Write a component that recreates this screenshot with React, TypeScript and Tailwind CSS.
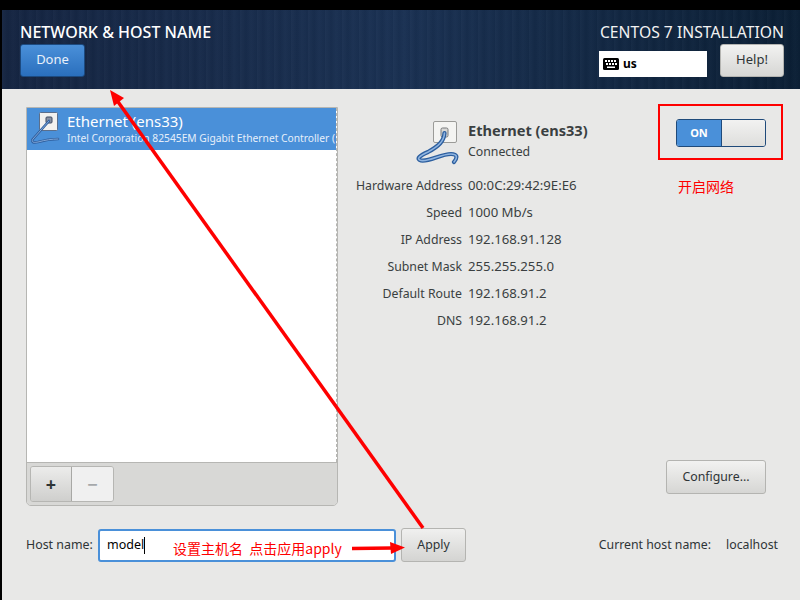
import React from 'react';

const details = [
  ['Hardware Address', '00:0C:29:42:9E:E6'],
  ['Speed', '1000 Mb/s'],
  ['IP Address', '192.168.91.128'],
  ['Subnet Mask', '255.255.255.0'],
  ['Default Route', '192.168.91.2'],
  ['DNS', '192.168.91.2'],
];

function EthernetIcon({ small }: { small?: boolean }) {
  if (small) {
    return (
      <svg width="34" height="34" viewBox="0 0 34 34" className="shrink-0">
        <rect x="9.5" y="0.5" width="18" height="18" rx="1" fill="#f2f1ef" stroke="#5b6f8c" />
        <rect x="16" y="5" width="6" height="6" rx="1" fill="#8c93a3" stroke="#3d4a63" />
        <path d="M19 9 L3 27 C1 30 3 31 8 30 C15 28 22 27 28 27" fill="none" stroke="#2f5f9e" strokeWidth="2.6" strokeLinecap="round" />
        <path d="M19 9 L3 27 C1 30 3 31 8 30 C15 28 22 27 28 27" fill="none" stroke="#7fa6d8" strokeWidth="1" strokeLinecap="round" />
      </svg>
    );
  }
  return (
    <svg width="48" height="44" viewBox="0 0 48 44" className="shrink-0">
      <rect x="17.5" y="0.5" width="23" height="21" rx="1.5" fill="#f4f4f2" stroke="#9b9b98" />
      <rect x="25" y="7" width="7" height="9" rx="1.5" fill="#d8d8d6" stroke="#77787a" />
      <path d="M28.5 12 C28 20 23 25 12 31 C3 35 0 38 5 39.5 C13 41 25 33 35 33 C41 33 42 36 38 41" fill="none" stroke="#2d5f9f" strokeWidth="4.2" strokeLinecap="round" />
      <path d="M28.5 12 C28 20 23 25 12 31 C3 35 0 38 5 39.5 C13 41 25 33 35 33 C41 33 42 36 38 41" fill="none" stroke="#8fb4e0" strokeWidth="1.6" strokeLinecap="round" />
    </svg>
  );
}

function KeyboardIcon() {
  return (
    <svg width="16" height="12" viewBox="0 0 16 12">
      <rect width="16" height="12" rx="1.5" fill="#000" />
      {[2, 5, 8, 11].map((x) => (
        <rect key={x} x={x} y="2" width="2" height="2" fill="#fff" />
      ))}
      {[3, 6, 9, 12].map((x) => (
        <rect key={x} x={x} y="5" width="2" height="2" fill="#fff" />
      ))}
      <rect x="4" y="8.5" width="8" height="1.5" fill="#fff" />
    </svg>
  );
}

function Annotations() {
  return (
    <>
      <svg width="800" height="600" className="absolute left-0 top-0 pointer-events-none">
        <line x1="423" y1="528" x2="116" y2="99" stroke="#fe0000" strokeWidth="3.5" />
        <polygon points="110,90 124,98 114,106" fill="#fe0000" />
        <line x1="352" y1="548.5" x2="392" y2="548" stroke="#fe0000" strokeWidth="3.5" />
        <polygon points="405,547.5 390,542 391,554" fill="#fe0000" />
      </svg>
      <div className="absolute left-[658px] top-[104px] w-[125px] h-[56px] border-2 border-[#fe0000]" />
      <div className="absolute left-[678px] top-[176px] text-[14px] leading-[20px] text-[#fe0000] font-['Noto_Sans_CJK_SC',sans-serif]">
        开启网络
      </div>
      <div className="absolute left-[173px] top-[538px] text-[14px] leading-[20px] text-[#fe0000] font-['Noto_Sans_CJK_SC',sans-serif]">
        设置主机名&nbsp;&nbsp;点击应用apply
      </div>
    </>
  );
}

export default function App() {
  return (
    <div className="relative w-[800px] h-[600px] overflow-hidden bg-black pt-[10px] pl-[2px] font-['Noto_Sans',sans-serif] text-[12.5px] text-[#2e3436]">
      <div className="h-[79px] flex justify-between pl-[18px] pr-[16px] bg-[repeating-linear-gradient(90deg,rgba(255,255,255,0.025)_0px,rgba(0,0,0,0.04)_6px,rgba(255,255,255,0.015)_11px,rgba(0,0,0,0.03)_17px),linear-gradient(90deg,#152542,#1a3153_50%,#0b1f35)]">
        <div className="pt-[12px]">
          <div className="text-[16px] leading-[20px] font-medium text-white whitespace-nowrap">NETWORK &amp; HOST NAME</div>
          <button className="mt-[2px] w-[65px] h-[33px] pb-[2px] rounded-[3px] border border-[#1c4a80] bg-gradient-to-b from-[#4a90d9] to-[#2a6fbd] text-[13px] text-[#e8f0fa]">
            Done
          </button>
        </div>
        <div className="pt-[12px] flex flex-col items-end">
          <div className="text-[15.7px] leading-[20px] text-[#f2f2f2] whitespace-nowrap">CENTOS 7 INSTALLATION</div>
          <div className="mt-[2px] flex items-start gap-[13px]">
            <div className="w-[108px] h-[26px] mt-[7px] bg-white flex items-center gap-[4px] pl-[4px] text-[12px] font-bold text-black">
              <KeyboardIcon />
              us
            </div>
            <button className="w-[64px] h-[33px] pb-[2px] rounded-[3px] border border-[#b4b4b1] bg-gradient-to-b from-[#f2f2f1] to-[#d6d6d4] text-[13px] text-[#2e3436]">
              Help!
            </button>
          </div>
        </div>
      </div>

      <div className="h-[511px] bg-[#e8e8e7] pl-[24px] pt-[18px]">
        <div className="flex h-[399px]">
          <div className="w-[312px] flex flex-col border border-[#b6b6b3] rounded-b-[5px] overflow-hidden">
            <div className="flex-1 bg-white border-r border-dashed border-r-[#b6b6b3]">
              <div className="h-[42px] bg-[#4a90d9] flex items-center gap-[3px] pl-[3px] text-white overflow-hidden whitespace-nowrap">
                <EthernetIcon small />
                <div className="min-w-0">
                  <div className="text-[15px] leading-[19px] -mt-[1px]">Ethernet (ens33)</div>
                  <div className="text-[10.25px] leading-[14px] text-[#e6effa]">
                    Intel Corporation 82545EM Gigabit Ethernet Controller (
                  </div>
                </div>
              </div>
            </div>
            <div className="h-[43px] bg-[#d8d8d6] border-t border-[#b6b6b3] pl-[3px] pt-[3px]">
              <div className="flex h-[36px] w-[84px] rounded-[3px] border border-[#b6b6b3] overflow-hidden">
                <div className="w-[41px] border-r border-[#a8a8a5] bg-gradient-to-b from-[#ececeb] to-[#cfcfcd] flex items-center justify-center text-[18px] font-bold text-[#2e3436]">
                  +
                </div>
                <div className="flex-1 bg-[#f0f0f0] flex items-center justify-center text-[18px] font-bold text-[#a5a8aa]">
                  −
                </div>
              </div>
            </div>
          </div>

          <div className="flex-1 flex flex-col pl-[18px]">
            <div className="flex items-start pt-[14px] pr-[34px] justify-between">
              <div className="flex items-start gap-[4px] pl-[60px]">
                <EthernetIcon />
                <div className="-mt-[1px]">
                  <div className="text-[14.6px] leading-[20px] font-bold text-[#3a3f41] whitespace-nowrap">Ethernet (ens33)</div>
                  <div className="mt-[3px] text-[12.3px] leading-[18px] text-[#3a3f41]">Connected</div>
                </div>
              </div>
              <div className="mt-[-2px] flex w-[90px] h-[28px] rounded-[3px] border border-[#1f4a7a] overflow-hidden shrink-0">
                <div className="w-[44px] bg-[#4a90d9] flex items-center justify-center text-[11px] font-bold text-white">ON</div>
                <div className="flex-1 border-l border-[#1f4a7a] bg-gradient-to-b from-[#f2f2f1] to-[#dededc]" />
              </div>
            </div>
            <div className="mt-[11px] grid grid-cols-[106px_1fr] gap-x-[6px] auto-rows-[27px] items-baseline text-[#3a3f41]">
              {details.map(([label, value]) => (
                <React.Fragment key={label}>
                  <div className="text-right whitespace-nowrap text-[12.3px]">{label}</div>
                  <div className="whitespace-nowrap text-[13.2px]">{value}</div>
                </React.Fragment>
              ))}
            </div>
            <div className="mt-auto mb-[12px] mr-[34px] self-end">
              <button className="w-[100px] h-[34px] rounded-[3px] border border-[#b4b4b1] bg-gradient-to-b from-[#f2f2f1] to-[#d6d6d4] text-[12.3px] text-[#2e3436]">
                Configure...
              </button>
            </div>
          </div>
        </div>

        <div className="mt-[22px] flex items-center h-[34px] pr-[22px]">
          <span className="w-[72px] text-[12.4px] whitespace-nowrap">Host name:</span>
          <div className="w-[298px] h-[33px] rounded-[3px] border-2 border-[#4a90d9] bg-white flex items-center pl-[7px] text-[12.5px] text-black">
            model<span className="w-px h-[17px] bg-black" />
          </div>
          <button className="ml-[5px] w-[65px] h-[34px] rounded-[3px] border border-[#b4b4b1] bg-gradient-to-b from-[#f0f0ef] to-[#d4d4d2] text-[12.3px] text-[#2e3436]">
            Apply
          </button>
          <span className="ml-auto whitespace-nowrap text-[12.3px]">Current host name:</span>
          <span className="ml-[15px] text-[12.3px]">localhost</span>
        </div>
      </div>

      <Annotations />
    </div>
  );
}
